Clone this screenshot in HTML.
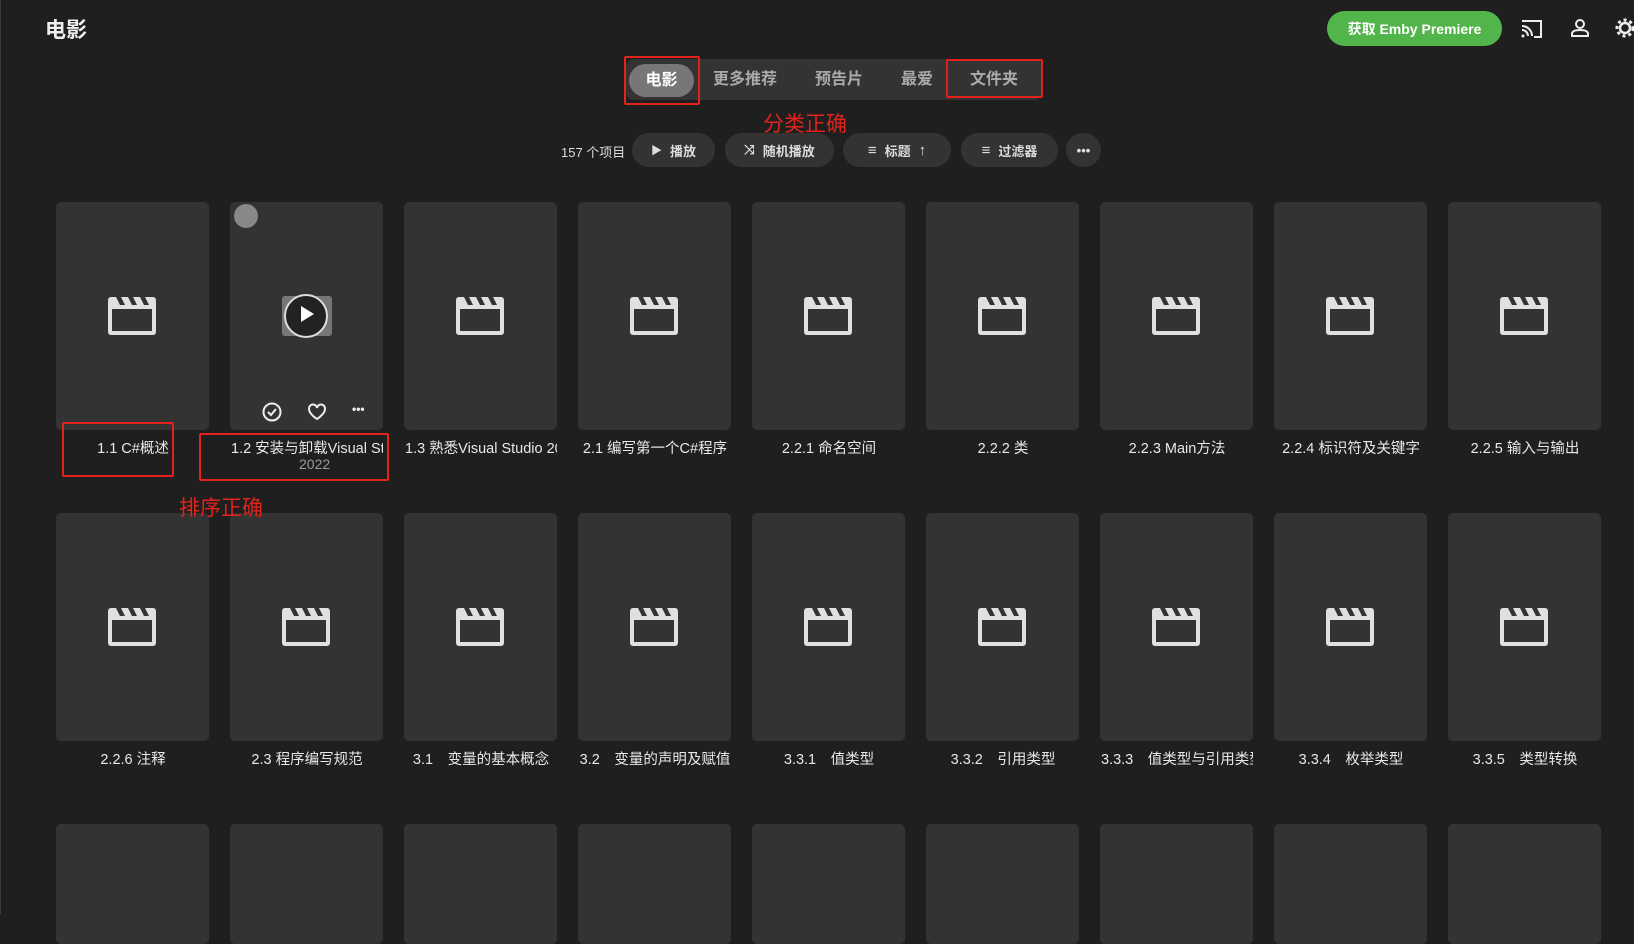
<!DOCTYPE html>
<html><head><meta charset="utf-8"><style>
*{margin:0;padding:0;box-sizing:border-box}
body{width:1634px;height:914px;background:#1f1f1f;overflow:hidden;position:relative;font-family:"Liberation Sans","Noto Sans CJK SC",sans-serif;color:#e6e6e6}
.abs{position:absolute}
.title{left:45px;top:14px;font-size:21px;font-weight:bold;color:#eee}
.prem{left:1327px;top:11px;width:175px;height:35px;border-radius:18px;background:#52b54b;color:#fff;font-size:14px;font-weight:bold;display:flex;align-items:center;justify-content:center}
.tabs{left:626px;top:59px;width:416px;height:41px;background:#333;border-radius:8px}
.tab{position:absolute;top:0;height:41px;line-height:41px;font-size:16px;font-weight:bold;color:#aaa;transform:translateX(-50%);white-space:nowrap}
.pill{left:629px;top:64px;width:65px;height:33px;border-radius:17px;background:#777;color:#fff;font-size:16px;font-weight:bold;text-align:center;line-height:33px}
.red{border:2px solid #e3231b;border-radius:2px}
.redt{color:#e3231b;font-size:21px}
.btn{top:133px;height:34px;border-radius:17px;background:#333;color:#ddd;font-size:13px;font-weight:bold;display:flex;align-items:center;justify-content:center;gap:8px}
.card{width:153px;height:228px;background:#333;border-radius:5px}
.cap{width:160px;font-size:14.5px;color:#e8e8e8;white-space:nowrap;overflow:hidden;text-align:center}
.cap.l{text-align:left;padding-left:4px}
</style></head><body>
<div class="abs" style="left:0;top:0;width:1px;height:914px;background:#3a3a3a"></div>
<div class="abs title">电影</div>
<div class="abs prem">获取 Emby Premiere</div>
<svg class="abs" style="left:1520px;top:18px" width="24" height="22" viewBox="0 0 24 22"><path d="M2 3h19v16h-7" fill="none" stroke="#eee" stroke-width="2"/><path d="M2 8a10 10 0 0 1 10 10M2 12a6 6 0 0 1 6 6" fill="none" stroke="#eee" stroke-width="2"/><circle cx="3" cy="18" r="1.5" fill="#eee"/></svg>
<svg class="abs" style="left:1570px;top:18px" width="20" height="20" viewBox="0 0 20 20"><circle cx="10" cy="6" r="4" fill="none" stroke="#eee" stroke-width="2"/><path d="M2 18v-2c0-3 4-4 8-4s8 1 8 4v2z" fill="none" stroke="#eee" stroke-width="2"/></svg>
<svg class="abs" style="left:1614px;top:17px" width="22" height="22" viewBox="0 0 22 22"><circle cx="11" cy="11" r="5" fill="none" stroke="#eee" stroke-width="2.5"/><circle cx="11" cy="11" r="8" fill="none" stroke="#eee" stroke-width="3" stroke-dasharray="3 3"/></svg>

<div class="abs tabs">
<div class="tab" style="left:119px">更多推荐</div>
<div class="tab" style="left:213px">预告片</div>
<div class="tab" style="left:291px">最爱</div>
<div class="tab" style="left:368px">文件夹</div>
</div>
<div class="abs pill">电影</div>
<div class="abs red" style="left:624px;top:56px;width:76px;height:49px"></div>
<div class="abs red" style="left:946px;top:59px;width:97px;height:39px"></div>
<div class="abs redt" style="left:763px;top:108px">分类正确</div>

<div class="abs" style="left:561px;top:142px;font-size:13px;color:#ddd">157 个项目</div>
<div class="abs btn" style="left:632px;width:83px"><span style="font-size:11px">▶</span>播放</div>
<div class="abs btn" style="left:725px;width:109px"><span>⤨</span>随机播放</div>
<div class="abs btn" style="left:843px;width:108px"><span style="font-size:15px">≡</span>标题 <span style="font-size:15px">↑</span></div>
<div class="abs btn" style="left:961px;width:97px"><span style="font-size:15px">≡</span>过滤器</div>
<div class="abs btn" style="left:1066px;width:35px">•••</div>

<div id="grid"></div>
<script>
const r1=["1.1 C#概述","1.2 安装与卸载Visual Studio 2022","1.3 熟悉Visual Studio 2022","2.1 编写第一个C#程序","2.2.1 命名空间","2.2.2 类","2.2.3 Main方法","2.2.4 标识符及关键字","2.2.5 输入与输出"];
const r2=["2.2.6 注释","2.3 程序编写规范","3.1　变量的基本概念","3.2　变量的声明及赋值","3.3.1　值类型","3.3.2　引用类型","3.3.3　值类型与引用类型的区别","3.3.4　枚举类型","3.3.5　类型转换"];
const clap='<svg width="50" height="40" viewBox="0 0 50 40" class="abs"><rect x="1" y="1" width="48" height="38" rx="3" fill="#e0e0e0"/><rect x="5" y="13" width="40" height="22" fill="#333"/><path d="M9 1l4 8h5l-4-8zM21 1l4 8h5l-4-8zM33 1l4 8h5l-4-8z" fill="#333"/></svg>';
let h='';
[[202,r1,446],[513,r2,757],[824,null,0]].forEach(([top,arr,ty])=>{
 for(let i=0;i<9;i++){
  const x=56+i*174;
  h+=`<div class="abs card" style="left:${x}px;top:${top}px;height:${arr?228:120}px"></div>`;
  if(arr){
   if(!(top==202&&i==1)) h+=`<div class="abs" style="left:${x+51}px;top:${top+94}px;width:50px;height:40px">${clap}</div>`;
   const over=arr[i].length>14&&(i==1||i==2||i==6);
   h+=`<div class="abs cap${over?' l':''}" style="left:${x-3}px;top:${ty-9}px;width:${over?156:160}px">${arr[i]}</div>`;
  }
 }
});
document.getElementById('grid').innerHTML=h;
</script>
<div class="abs" style="left:234px;top:204px;width:24px;height:24px;border-radius:50%;background:#888"></div>
<div class="abs" style="left:282px;top:296px;width:50px;height:40px;background:#777;border-radius:3px"></div>
<div class="abs" style="left:284px;top:294px;width:44px;height:44px;border-radius:50%;background:#222;border:2px solid #ddd"></div>
<div class="abs" style="left:301px;top:306px;width:0;height:0;border-left:13px solid #fff;border-top:8px solid transparent;border-bottom:8px solid transparent"></div>
<svg class="abs" style="left:262px;top:402px" width="20" height="20" viewBox="0 0 20 20"><circle cx="10" cy="10" r="8.5" fill="none" stroke="#eee" stroke-width="2"/><path d="M6 10l3 3 5-6" fill="none" stroke="#eee" stroke-width="2"/></svg>
<svg class="abs" style="left:307px;top:403px" width="20" height="18" viewBox="0 0 20 18"><path d="M10 16S2 11 2 6a4 4 0 0 1 8-1 4 4 0 0 1 8 1c0 5-8 10-8 10z" fill="none" stroke="#eee" stroke-width="2"/></svg>
<div class="abs" style="left:352px;top:402px;font-size:12px;color:#eee;font-weight:bold">•••</div>
<div class="abs" style="left:299px;top:456px;font-size:14px;color:#999">2022</div>
<div class="abs red" style="left:62px;top:422px;width:112px;height:55px"></div>
<div class="abs red" style="left:199px;top:433px;width:190px;height:48px"></div>
<div class="abs redt" style="left:179px;top:492px">排序正确</div>
</body></html>
